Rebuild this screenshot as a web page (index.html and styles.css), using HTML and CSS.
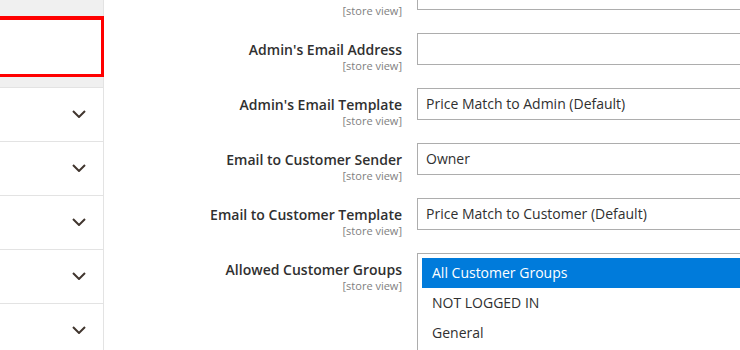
FILE: index.html
```html
<!DOCTYPE html>
<html>
<head>
<meta charset="utf-8">
<link rel="stylesheet" href="styles.css">
</head>
<body>
<div class="page">
  <aside class="sidebar">
    <div class="sidebar-top">
      <div class="highlight"></div>
    </div>
    <div class="tab"><svg class="chev" width="14" height="8" viewBox="0 0 14 8"><path d="M1 1 L7 7 L13 1" fill="none" stroke="#41362f" stroke-width="2"/></svg></div>
    <div class="tab"><svg class="chev" width="14" height="8" viewBox="0 0 14 8"><path d="M1 1 L7 7 L13 1" fill="none" stroke="#41362f" stroke-width="2"/></svg></div>
    <div class="tab"><svg class="chev" width="14" height="8" viewBox="0 0 14 8"><path d="M1 1 L7 7 L13 1" fill="none" stroke="#41362f" stroke-width="2"/></svg></div>
    <div class="tab"><svg class="chev" width="14" height="8" viewBox="0 0 14 8"><path d="M1 1 L7 7 L13 1" fill="none" stroke="#41362f" stroke-width="2"/></svg></div>
    <div class="tab"><svg class="chev" width="14" height="8" viewBox="0 0 14 8"><path d="M1 1 L7 7 L13 1" fill="none" stroke="#41362f" stroke-width="2"/></svg></div>
  </aside>
  <main class="main">
    <div class="form">
      <div class="row">
        <div class="label"><span class="label-text">Admin's Email Sender</span><span class="scope">[store view]</span></div>
        <div class="control"><div class="input"></div></div>
      </div>
      <div class="row">
        <div class="label"><span class="label-text">Admin's Email Address</span><span class="scope">[store view]</span></div>
        <div class="control"><div class="input"></div></div>
      </div>
      <div class="row">
        <div class="label"><span class="label-text">Admin's Email Template</span><span class="scope">[store view]</span></div>
        <div class="control"><div class="input">Price Match to Admin (Default)</div></div>
      </div>
      <div class="row">
        <div class="label"><span class="label-text">Email to Customer Sender</span><span class="scope">[store view]</span></div>
        <div class="control"><div class="input">Owner</div></div>
      </div>
      <div class="row">
        <div class="label"><span class="label-text">Email to Customer Template</span><span class="scope">[store view]</span></div>
        <div class="control"><div class="input">Price Match to Customer (Default)</div></div>
      </div>
      <div class="row row-multi">
        <div class="label"><span class="label-text">Allowed Customer Groups</span><span class="scope">[store view]</span></div>
        <div class="control">
          <div class="multiselect">
            <div class="option selected">All Customer Groups</div>
            <div class="option">NOT LOGGED IN</div>
            <div class="option">General</div>
          </div>
        </div>
      </div>
    </div>
  </main>
</div>
</body>
</html>
```

FILE: styles.css
```css
* { box-sizing: border-box; }
html, body {
  margin: 0;
  padding: 0;
  width: 740px;
  height: 350px;
  overflow: hidden;
  background: #ffffff;
  font-family: "Open Sans", "Noto Sans", sans-serif;
  color: #303030;
}
.page {
  display: flex;
  height: 350px;
  overflow: hidden;
}
.sidebar {
  width: 104px;
  flex: none;
  border-right: 1px solid #e3e3e3;
  background: #ffffff;
  display: flex;
  flex-direction: column;
}
.sidebar-top {
  background: #f0f0f0;
  padding: 16px 0 10px 0;
  height: 87px;
  flex: none;
}
.highlight {
  height: 61px;
  margin-left: -10px;
  margin-right: -1px;
  border: 3px solid #ff0000;
  border-top-width: 4px;
  background: #ffffff;
}
.tab {
  height: 54px;
  flex: none;
  border-top: 1px solid #e3e3e3;
  display: flex;
  align-items: center;
  justify-content: flex-end;
  padding-right: 17px;
  padding-bottom: 1px;
}
.chev { display: block; }
.main {
  flex: 1;
  overflow: hidden;
}
.form {
  margin-top: -22px;
  display: flex;
  flex-direction: column;
  gap: 23px;
}
.row {
  display: grid;
  grid-template-columns: 298px 420px;
  column-gap: 15px;
  height: 32px;
}
.row-multi { height: 130px; }
.label {
  display: flex;
  flex-direction: column;
  align-items: flex-end;
  padding-top: 8px;
}
.label-text {
  font-size: 14px;
  font-weight: 600;
  line-height: 18px;
  color: #303030;
}
.scope {
  font-size: 11px;
  line-height: 13px;
  color: #808080;
}
.input {
  height: 32px;
  border: 1px solid #adadad;
  padding: 0 8px;
  font-size: 14px;
  line-height: 30px;
  color: #303030;
  white-space: nowrap;
}
.multiselect {
  border: 1px solid #adadad;
  padding: 4px;
  height: 130px;
  overflow: hidden;
}
.option {
  height: 30px;
  line-height: 30px;
  padding-left: 10px;
  font-size: 14px;
  color: #303030;
  white-space: nowrap;
}
.option.selected {
  background: #007bdb;
  color: #ffffff;
}
```
